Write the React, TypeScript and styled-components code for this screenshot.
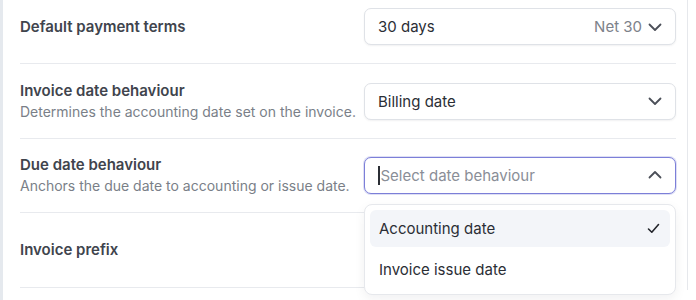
import React from 'react';
import styled, { createGlobalStyle } from 'styled-components';

const GlobalStyle = createGlobalStyle`
  * { box-sizing: border-box; }
  body {
    margin: 0;
    background: #ffffff;
    font-family: Inter, "Noto Sans", "Liberation Sans", sans-serif;
    -webkit-font-smoothing: antialiased;
  }
`

const Shell = styled.div`
  height: 300px;
  overflow: hidden;
  border-left: 3px solid #e5e9ee;
`

const Card = styled.div`
  width: 685px;
  height: 300px;
  border-right: 1px solid #e6e8ec;
  padding: 0 11px 0 17px;
`

const List = styled.div`
  margin-top: -10px;
`

const Row = styled.div`
  height: 74.4px;
  display: flex;
  align-items: center;
  justify-content: space-between;
  border-bottom: 1px solid #e8eaee;
`

const LabelBlock = styled.div`
  display: flex;
  flex-direction: column;
  gap: 1px;
`

const Title = styled.div`
  font-size: 15px;
  line-height: 20px;
  font-weight: 600;
  color: #40444d;
`

const Description = styled.div`
  font-size: 14px;
  line-height: 20px;
  color: #7a7f88;
`

const Field = styled.div`
  position: relative;
  width: 312px;
`

const Trigger = styled.div<{ focused?: boolean }>`
  height: 37px;
  display: flex;
  align-items: center;
  gap: 6px;
  padding: 0 13px 0 13px;
  border-radius: 7px;
  background: #ffffff;
  border: 1px solid ${({ focused }) => (focused ? '#7c7fd8' : '#dfe2e7')};
  box-shadow: ${({ focused }) =>
    focused ? '0 0 0 1px rgba(124,127,216,0.25)' : '0 1px 2px rgba(20,24,40,0.06)'};
`

const Value = styled.span`
  flex: 1;
  font-size: 15px;
  color: #2b2e35;
`

const Hint = styled.span`
  font-size: 15px;
  color: #7d828a;
`

const Placeholder = styled.span`
  flex: 1;
  display: flex;
  align-items: center;
  font-size: 15px;
  color: #8a8e97;
`

const Caret = styled.span`
  width: 1.5px;
  height: 19px;
  background: #2b2e35;
  margin-right: 1px;
`

const Menu = styled.div`
  position: absolute;
  top: calc(100% + 10px);
  left: 0;
  width: 312px;
  padding: 5px 5px 6px;
  border: 1px solid #e6e8ec;
  border-radius: 8px;
  background: #ffffff;
  box-shadow: 0 4px 12px rgba(20,24,40,0.06);
  display: flex;
  flex-direction: column;
  gap: 4px;
`

const Option = styled.div<{ active?: boolean }>`
  height: 37px;
  display: flex;
  align-items: center;
  justify-content: space-between;
  padding: 0 10px 0 9px;
  border-radius: 6px;
  font-size: 15px;
  color: #2b2e35;
  background: ${({ active }) => (active ? '#f3f5f9' : 'transparent')};
`

const Chevron: React.FC<{ up?: boolean }> = ({ up }) => (
  <svg width="14" height="14" viewBox="0 0 14 14" fill="none">
    <path
      d={up ? 'M1.5 9.5 L7 4 L12.5 9.5' : 'M1.5 4.5 L7 10 L12.5 4.5'}
      stroke="#4b4f58"
      strokeWidth="1.8"
      strokeLinecap="round"
      strokeLinejoin="round"
    />
  </svg>
)

const Check = () => (
  <svg width="13" height="11" viewBox="0 0 13 11" fill="none">
    <path d="M1.5 6 L4.8 9.2 L11.5 1.5" stroke="#23252b" strokeWidth="1.6" strokeLinecap="round" strokeLinejoin="round" />
  </svg>
)

const App: React.FC = () => {
  return (
    <>
      <GlobalStyle />
      <Shell>
        <Card>
          <List>
            <Row>
              <LabelBlock>
                <Title>Default payment terms</Title>
              </LabelBlock>
              <Field>
                <Trigger>
                  <Value>30 days</Value>
                  <Hint>Net 30</Hint>
                  <Chevron />
                </Trigger>
              </Field>
            </Row>
            <Row>
              <LabelBlock>
                <Title>Invoice date behaviour</Title>
                <Description>Determines the accounting date set on the invoice.</Description>
              </LabelBlock>
              <Field>
                <Trigger>
                  <Value>Billing date</Value>
                  <Chevron />
                </Trigger>
              </Field>
            </Row>
            <Row>
              <LabelBlock>
                <Title>Due date behaviour</Title>
                <Description>Anchors the due date to accounting or issue date.</Description>
              </LabelBlock>
              <Field>
                <Trigger focused>
                  <Placeholder>
                    <Caret />
                    Select date behaviour
                  </Placeholder>
                  <Chevron up />
                </Trigger>
                <Menu>
                  <Option active>
                    Accounting date
                    <Check />
                  </Option>
                  <Option>Invoice issue date</Option>
                </Menu>
              </Field>
            </Row>
            <Row>
              <LabelBlock>
                <Title>Invoice prefix</Title>
              </LabelBlock>
            </Row>
          </List>
        </Card>
      </Shell>
    </>
  );
};

export default App;
